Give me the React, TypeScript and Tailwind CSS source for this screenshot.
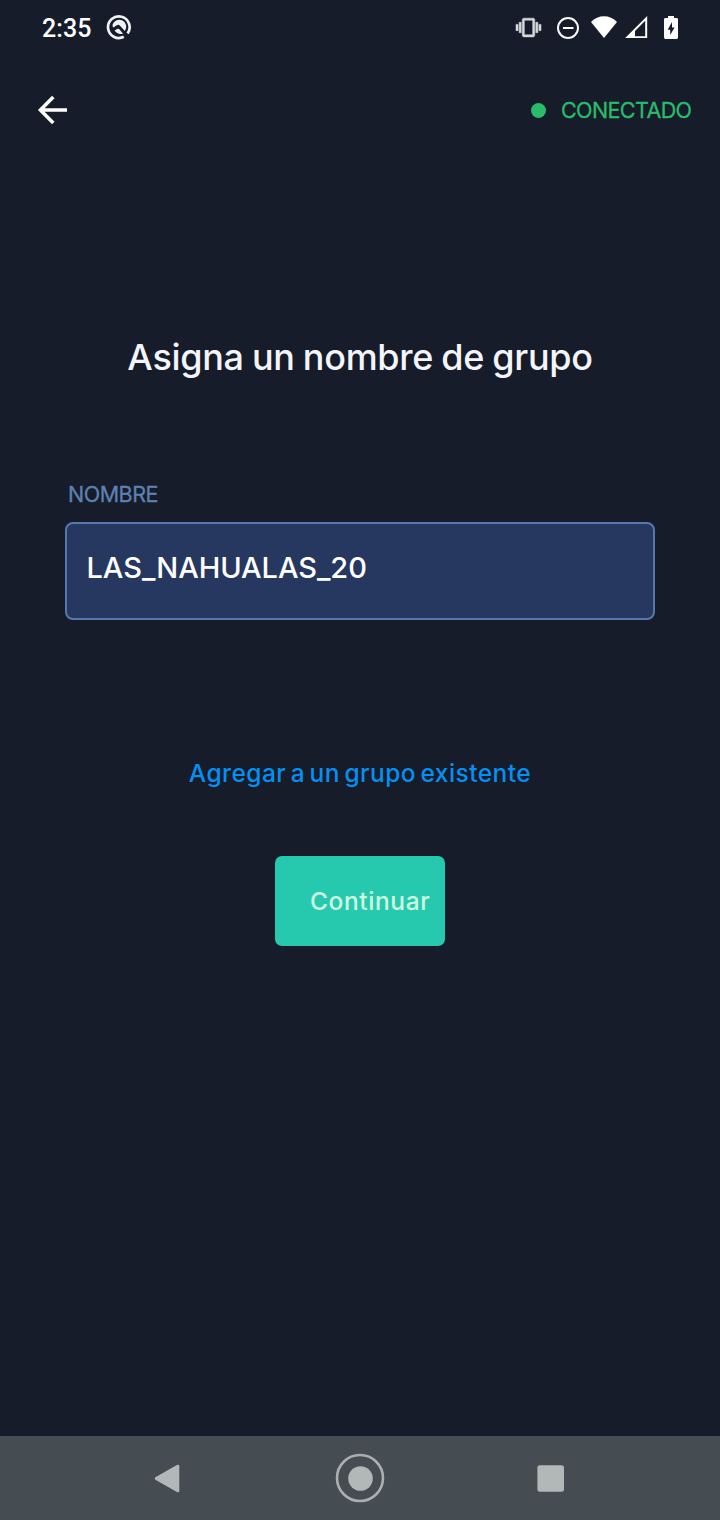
function StatusBar() {
  return (
    <div className="flex h-14 items-start justify-between pl-[42px] pr-10">
      <div className="flex items-start">
        <span className="mt-[14px] w-[64px] whitespace-nowrap font-[Roboto,sans-serif] text-[25px] leading-[30px] font-medium tracking-[0.1px] text-white">
          2:35
        </span>
        <svg className="mt-[14px]" width="26" height="26" viewBox="0 0 26 26" fill="none">
          <path d="M17.8 22.8A10.8 10.8 0 1 1 21.6 19.5" stroke="#f1f2f4" strokeWidth="2.7" />
          <path d="M6.6 10.6A7 7 0 1 1 18.8 17L13.8 11.4Q12.4 10.2 10.8 11.2L7.4 13.6Q6.2 12.6 6.6 10.6z" fill="#f1f2f4" />
          <path d="M8.6 16.6l3-1.8q.8-.4 1.5.3l4 4.6Q11.5 21 8.6 16.6z" fill="#f1f2f4" />
        </svg>
      </div>
      <svg className="mt-3" width="166" height="32" viewBox="514 12 166 32" fill="none">
        <path
          transform="translate(516 15) scale(1.042)"
          fill="#d6d8dc"
          stroke="#d6d8dc"
          strokeWidth="0.5"
          d="M0 15h2V9H0v6zm3 2h2V7H3v10zm19-8v6h2V9h-2zm-3 8h2V7h-2v10zM16.5 3h-9C6.67 3 6 3.67 6 4.5v15c0 .83.67 1.5 1.5 1.5h9c.83 0 1.5-.67 1.5-1.5v-15c0-.83-.67-1.5-1.5-1.5zM16 19H8V5h8v14z"
        />
        <circle cx="568" cy="28" r="10" stroke="#f7f7f8" strokeWidth="2" />
        <path d="M563 28h10.5" stroke="#fff" strokeWidth="2" />
        <path d="M591 22C598 14.2 610 14.2 617 22L604 38z" fill="#fff" />
        <path d="M647.2 16v22h-22z" fill="#fff" />
        <path d="M645.2 20.8V36.2H635V31z" fill="#161c2a" />
        <path
          d="M668 16h6v2h2.6q1.4 0 1.4 1.4v18.2q0 1.4-1.4 1.4h-11.2q-1.4 0-1.4-1.4V19.4q0-1.4 1.4-1.4H668z"
          fill="#fff"
        />
        <path d="M672 22v5.6h2.6L670.2 35v-5.3h-2.5z" fill="#161c2a" />
      </svg>
    </div>
  );
}

function Header() {
  return (
    <header className="flex h-[108px] items-center justify-between pl-[36px] pr-[28px]">
      <button aria-label="Volver">
        <svg width="34" height="34" viewBox="36 93 34 34" fill="none">
          <path d="M53.3 97L40.4 110l12.9 13M40.4 110H67" stroke="#fff" strokeWidth="3.5" />
        </svg>
      </button>
      <div className="flex items-center">
        <span className="size-[15px] rounded-full bg-[#2abb6b]" />
        <span className="ml-[15px] w-[131px] whitespace-nowrap text-[21.5px] leading-7 tracking-[-0.6px] text-[#2abb6b] [-webkit-text-stroke:0.3px]">
          CONECTADO
        </span>
      </div>
    </header>
  );
}

function NavigationBar() {
  return (
    <nav className="h-[84px] bg-[#454d52]">
      <svg width="720" height="84" viewBox="0 1436 720 84" fill="none">
        <path d="M156 1478.5l22-12.5v25z" fill="#b2b7b8" stroke="#b2b7b8" strokeWidth="2.6" strokeLinejoin="round" />
        <circle cx="360" cy="1478" r="23" stroke="#aaafb0" strokeWidth="2.6" />
        <circle cx="360.5" cy="1478.5" r="12.3" fill="#b2b7b8" />
        <rect x="537.4" y="1465.2" width="26.6" height="26.6" rx="2.4" fill="#b2b7b8" />
      </svg>
    </nav>
  );
}

export default function App() {
  return (
    <div className="flex h-[1520px] w-[720px] flex-col bg-[#161c2a] font-[Inter,sans-serif]">
      <StatusBar />
      <Header />
      <main className="flex flex-1 flex-col items-center">
        <h1 className="mt-[169px] whitespace-nowrap text-[36px] leading-[48px] font-medium tracking-[-0.3px] [word-spacing:-1.1px] text-[#f4f5fb]">
          Asigna un nombre de grupo
        </h1>
        <label className="mt-[99px] flex w-[590px] flex-col">
          <span className="ml-[3px] text-[21.5px] leading-7 tracking-[-0.5px] text-[#5e80b2] [-webkit-text-stroke:0.3px]">
            NOMBRE
          </span>
          <input
            className="mt-[14px] h-[98px] rounded-lg border-2 border-[#5678ac] bg-[#263860] pt-0 pr-5 pb-[8px] pl-[19.5px] text-[29px] font-medium tracking-[-0.05px] text-white outline-none"
            defaultValue="LAS_NAHUALAS_20"
          />
        </label>
        <a className="mt-[137px] whitespace-nowrap text-[24.5px] leading-8 font-medium tracking-[0.45px] [word-spacing:-2.5px] text-[#078ff0]">
          Agregar a un grupo existente
        </a>
        <button className="mt-[67px] flex h-[90px] w-[170px] items-center rounded-[7px] bg-[#27c9ae] pl-[35px] text-[24.5px] font-medium tracking-[0.6px] text-[#d0fbe0]">
          Continuar
        </button>
      </main>
      <NavigationBar />
    </div>
  );
}
